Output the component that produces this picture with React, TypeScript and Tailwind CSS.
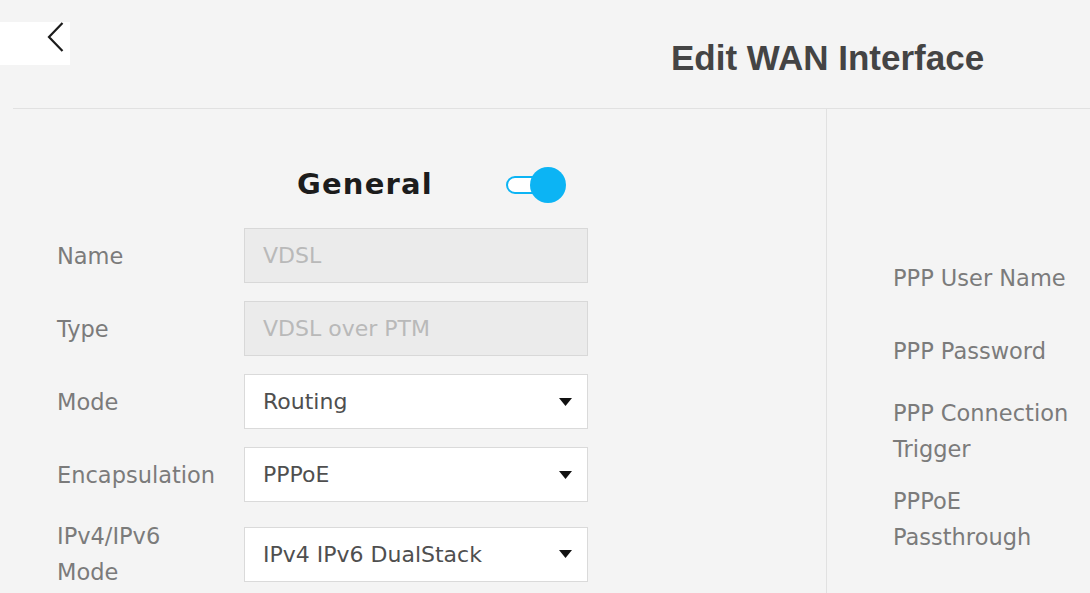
import React from "react";

const font = { fontFamily: '"DejaVu Sans", "Liberation Sans", sans-serif' };

type RowProps = {
  label: React.ReactNode;
  children: React.ReactNode;
  className?: string;
};

function FormRow({ label, children, className = "" }: RowProps) {
  return (
    <div className={`flex items-center min-h-[55px] ${className}`}>
      <div className="w-[187px] text-[22.5px] leading-[36px] text-[#7b7b7b]">{label}</div>
      {children}
    </div>
  );
}

function ReadOnlyField({ value }: { value: string }) {
  return (
    <div className="flex h-[55px] w-[344px] items-center border border-[#d8d8d8] bg-[#ebebeb] pl-[18px] text-[22px] text-[#b9b9b9]">
      {value}
    </div>
  );
}

function SelectField({ value }: { value: string }) {
  return (
    <div className="flex h-[55px] w-[344px] items-center justify-between border border-[#dadada] bg-white pl-[18px] pr-[15px] text-[22px] text-[#4f4f4f]">
      <span>{value}</span>
      <svg width="13" height="8" viewBox="0 0 13 8">
        <path d="M0 0 H13 L6.5 8 Z" fill="#111" />
      </svg>
    </div>
  );
}

function Toggle() {
  return (
    <div className="relative h-[36px] w-[60px]">
      <div className="absolute left-0 top-[9px] h-[18px] w-[42px] rounded-full border-2 border-[#0cb4f4] bg-white" />
      <div className="absolute right-0 top-0 h-[36px] w-[36px] rounded-full bg-[#0cb4f4]" />
    </div>
  );
}

export default function App() {
  return (
    <div className="min-h-screen w-[1090px] overflow-hidden bg-[#f4f4f4]" style={font}>
      <header className="flex h-[108px] items-start">
        <div className="mt-[22px] flex h-[43px] w-[70px] items-start bg-white pl-[47px]">
          <svg width="17" height="30" viewBox="0 0 17 30" fill="none">
            <path d="M15.5 1 L2 15 L15.5 29" stroke="#1b1b1b" strokeWidth="2.2" />
          </svg>
        </div>
        <h1
          className="ml-[601px] mt-[41px] text-[35px] font-bold leading-[34px] text-[#444444]"
          style={{ fontFamily: '"Liberation Sans", Arial, sans-serif' }}
        >
          Edit WAN Interface
        </h1>
      </header>

      <div className="ml-[13px] flex min-h-[485px] border-t border-[#e1e1e1]">
        <section className="w-[814px] border-r border-[#e1e1e1] pt-[58px]">
          <div className="flex h-[36px] items-center pl-[284px]">
            <h2 className="w-[209px] text-[29px] font-bold tracking-[1.2px] text-[#1c1c1c]">General</h2>
            <Toggle />
          </div>

          <div className="mt-[25px] flex flex-col gap-[18px] pl-[44px]">
            <FormRow label="Name">
              <ReadOnlyField value="VDSL" />
            </FormRow>
            <FormRow label="Type">
              <ReadOnlyField value="VDSL over PTM" />
            </FormRow>
            <FormRow label="Mode">
              <SelectField value="Routing" />
            </FormRow>
            <FormRow label="Encapsulation">
              <SelectField value="PPPoE" />
            </FormRow>
            <FormRow
              className="-mt-[2px]"
              label={
                <>
                  IPv4/IPv6
                  <br />
                  Mode
                </>
              }
            >
              <SelectField value="IPv4 IPv6 DualStack" />
            </FormRow>
          </div>
        </section>

        <section className="flex-1 pl-[66px] pt-[141px] text-[22.5px] leading-[36px] text-[#7b7b7b]">
          <div className="flex h-[55px] items-center whitespace-nowrap">PPP User Name</div>
          <div className="mt-[18px] flex h-[55px] items-center whitespace-nowrap">PPP Password</div>
          <div className="mt-[17px] whitespace-nowrap">
            PPP Connection
            <br />
            Trigger
          </div>
          <div className="mt-[16px] whitespace-nowrap">
            PPPoE
            <br />
            Passthrough
          </div>
        </section>
      </div>
    </div>
  );
}
